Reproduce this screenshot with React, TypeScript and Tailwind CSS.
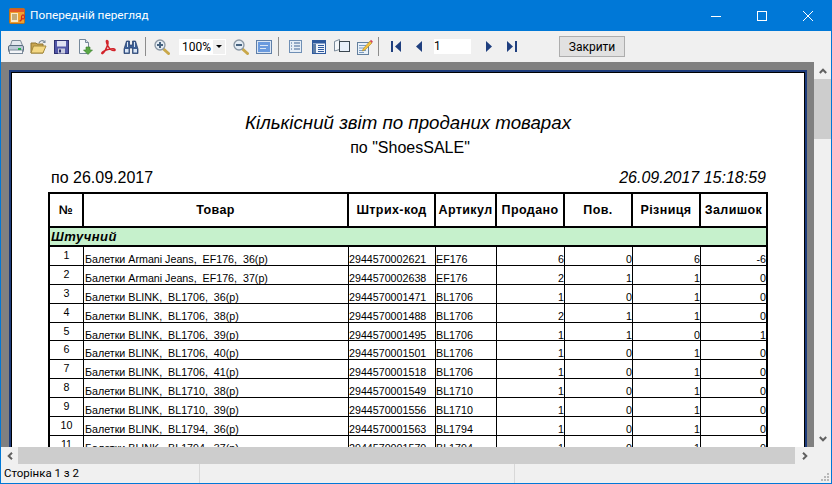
import React from 'react';

const SANS = "font-['Liberation_Sans',Arial,sans-serif]";

const rows = [
  ['1', 'Балетки Armani Jeans,  EF176,  36(р)', '2944570002621', 'EF176', '6', '0', '6', '-6'],
  ['2', 'Балетки Armani Jeans,  EF176,  37(р)', '2944570002638', 'EF176', '2', '1', '1', '0'],
  ['3', 'Балетки BLINK,  BL1706,  36(р)', '2944570001471', 'BL1706', '1', '0', '1', '0'],
  ['4', 'Балетки BLINK,  BL1706,  38(р)', '2944570001488', 'BL1706', '2', '1', '1', '0'],
  ['5', 'Балетки BLINK,  BL1706,  39(р)', '2944570001495', 'BL1706', '1', '1', '0', '1'],
  ['6', 'Балетки BLINK,  BL1706,  40(р)', '2944570001501', 'BL1706', '1', '0', '1', '0'],
  ['7', 'Балетки BLINK,  BL1706,  41(р)', '2944570001518', 'BL1706', '1', '0', '1', '0'],
  ['8', 'Балетки BLINK,  BL1710,  38(р)', '2944570001549', 'BL1710', '1', '0', '1', '0'],
  ['9', 'Балетки BLINK,  BL1710,  39(р)', '2944570001556', 'BL1710', '1', '0', '1', '0'],
  ['10', 'Балетки BLINK,  BL1794,  36(р)', '2944570001563', 'BL1794', '1', '0', '1', '0'],
  ['11', 'Балетки BLINK,  BL1794,  37(р)', '2944570001570', 'BL1794', '1', '0', '1', '0'],
];

const headers = ['№', 'Товар', 'Штрих-код', 'Артикул', 'Продано', 'Пов.', 'Різниця', 'Залишок'];

// toolbar icons, all drawn on a 16 box
const Ico = ({ children, w = 16, h = 16 }: { children: React.ReactNode; w?: number; h?: number }) => (
  <svg width={w} height={h} viewBox={`0 0 ${w} ${h}`} className="block">{children}</svg>
);

const Printer = () => (
  <Ico>
    <path d="M4 1.5h8.5l2 5h-12z" fill="#e4e9ef" stroke="#7b8a99" />
    <rect x="0.5" y="6.5" width="15" height="6.5" rx="1.5" fill="#bccad7" stroke="#5a6d80" />
    <rect x="1.5" y="11" width="13" height="3.5" fill="#f4f6f9" stroke="#7b8a99" />
    <rect x="10" y="9" width="3" height="2" fill="#22b14c" />
  </Ico>
);

const Folder = () => (
  <Ico w={17}>
    <path d="M1 4h5l1 1h6v9H1z" fill="#c9a550" stroke="#8e7430" />
    <path d="M1 14l2.5-7h12.5l-3 7z" fill="#f4d884" stroke="#a58a3c" />
    <path d="M9 4c1-2.5 3.5-3 5.5-1.5" fill="none" stroke="#7d8c99" strokeWidth="1.2" />
    <path d="M15.5 1v3h-3z" fill="#7d8c99" />
  </Ico>
);

const Floppy = () => (
  <Ico w={15}>
    <rect x="0.5" y="1.5" width="14" height="13" fill="#5257a8" stroke="#2d3070" />
    <rect x="3" y="2" width="9" height="5.5" fill="#dfe1f2" />
    <rect x="4" y="9.5" width="7" height="5" fill="#c9cce0" />
    <rect x="5" y="10.5" width="2" height="3" fill="#2d3070" />
  </Ico>
);

const DocDown = () => (
  <Ico>
    <path d="M2.5 0.5h6l3 3v11h-9z" fill="#f5f7fa" stroke="#76889a" />
    <path d="M8.5 0.5v3h3" fill="#d5dde6" stroke="#76889a" />
    <path d="M9 8h4v3h2.5L11 15.5 6.5 11H9z" fill="#5aa845" stroke="#3a7d2c" strokeWidth="0.6" />
  </Ico>
);

const Pdf = () => (
  <Ico>
    <path
      d="M7 1.5c-1 0-.8 2 1 5.5 1.3 2.6 3.5 4.6 6 4.6 1.6 0 1.4-1.7-.5-1.8-3-.2-8.5 1-11 3.2-1.6 1.4-.3 2.3 1 .8C6 11 8.6 4.5 8 2.5 7.8 1.8 7.5 1.5 7 1.5z"
      fill="none"
      stroke="#d2232a"
      strokeWidth="1.5"
    />
  </Ico>
);

const Binoculars = () => (
  <Ico>
    <path d="M3.5 2h3v4h3V2h3l2.5 8v4.5h-5.5V9h-3v5.5H1V10z" fill="#3d5f95" stroke="#1f3864" strokeWidth="0.7" />
    <rect x="2" y="10" width="3.5" height="3.5" fill="#dbe6f4" />
    <rect x="10.5" y="10" width="3.5" height="3.5" fill="#dbe6f4" />
    <rect x="4" y="3" width="1" height="5" fill="#dbe6f4" />
    <rect x="11" y="3" width="1" height="5" fill="#dbe6f4" />
  </Ico>
);

const Magnifier = ({ plus }: { plus?: boolean }) => (
  <Ico>
    <path d="M9.5 10l5 4.5" stroke="#c9a84a" strokeWidth="3" strokeLinecap="round" />
    <circle cx="6" cy="6" r="5" fill="#e4ecf4" stroke="#8a97a4" strokeWidth="1.3" />
    <rect x="3" y="5" width="6" height="2" fill="#46627f" />
    {plus && <rect x="5" y="3" width="2" height="6" fill="#46627f" />}
  </Ico>
);

const PageWidth = () => (
  <Ico>
    <rect x="0.5" y="1.5" width="15" height="13" fill="#dbe6f4" stroke="#5f7fa8" />
    <rect x="2" y="3" width="12" height="10" fill="#6a9ade" />
    <rect x="4" y="6" width="8" height="1" fill="#dbe6f4" />
    <rect x="4" y="9" width="6" height="1" fill="#dbe6f4" />
  </Ico>
);

const Outline = () => (
  <Ico w={13}>
    <rect x="0.5" y="1.5" width="12" height="12" fill="#e6eef7" stroke="#6f8fb5" />
    <path d="M2 4h1M2 7h1M2 10h1M5 4h6M5 7h6M5 10h6" stroke="#3f6394" />
  </Ico>
);

const Thumbs = () => (
  <Ico w={14}>
    <rect x="0.5" y="1.5" width="13" height="13" fill="#f0f4fa" stroke="#2f5a9e" />
    <rect x="0.5" y="1.5" width="13" height="3" fill="#2f5a9e" />
    <rect x="1" y="5" width="3" height="9" fill="#5f7fa8" />
    <path d="M6 6.5h6M6 8.5h6M6 10.5h6M6 12.5h6" stroke="#2f5a9e" />
  </Ico>
);

const Book = () => (
  <Ico>
    <path d="M0.5 12V2.5l5-2v10z" fill="#f4f7fb" stroke="#7c8c9c" />
    <rect x="5.5" y="2.5" width="10" height="10" fill="#e8f0fa" stroke="#3a4650" />
  </Ico>
);

const Note = () => (
  <Ico>
    <rect x="0.5" y="3.5" width="11" height="12" fill="#e8f0f8" stroke="#64809e" />
    <path d="M2 6.5h7M2 9h7M2 11.5h7M2 13.5h5" stroke="#7a9cc2" />
    <path d="M6 10l7-8 2 2-7 7-2.5 1z" fill="#f3c23c" stroke="#a9852a" strokeWidth="0.6" />
    <path d="M13 2l1-1.2 1.8 1.7L15 4z" fill="#d2405a" />
  </Ico>
);

const First = () => (
  <Ico w={10} h={11}>
    <rect x="0" y="0" width="2" height="11" fill="#1f3f7f" />
    <path d="M10 0v11L4 5.5z" fill="#1f3f7f" />
  </Ico>
);
const Last = () => (
  <Ico w={10} h={11}>
    <rect x="8" y="0" width="2" height="11" fill="#1f3f7f" />
    <path d="M0 0v11l6-5.5z" fill="#1f3f7f" />
  </Ico>
);
const Prev = () => (
  <Ico w={6} h={11}><path d="M6 0v11L0 5.5z" fill="#1f3f7f" /></Ico>
);
const Next = () => (
  <Ico w={6} h={11}><path d="M0 0v11l6-5.5z" fill="#1f3f7f" /></Ico>
);

const Slot = ({ children, className = '' }: { children: React.ReactNode; className?: string }) => (
  <div className={`w-[23px] h-[22px] flex items-center justify-center shrink-0 ${className}`}>{children}</div>
);

const Sep = ({ className = '' }: { className?: string }) => (
  <div className={`w-px h-[19px] bg-[#8c8c8c] shrink-0 ${className}`} />
);

const ScrollChevron = ({ rotate }: { rotate: string }) => (
  <svg width="8" height="6" viewBox="0 0 8 6" className={rotate}>
    <path d="M0.8 5L4 1.7 7.2 5" fill="none" stroke="#606060" strokeWidth="2" />
  </svg>
);

export default function App() {
  return (
    <div className={`w-[832px] h-[484px] flex flex-col overflow-hidden bg-[#f0f0f0] border border-[#0078d7] ${SANS}`}>
      {/* Title bar */}
      <div className="h-[30px] shrink-0 bg-[#0078d7] flex items-center text-white">
        <svg width="16" height="16" viewBox="0 0 16 16" className="ml-[8px]">
          <rect x="0.5" y="0.5" width="15" height="15" rx="1" fill="#f0a030" stroke="#b8701c" />
          <rect x="1" y="1" width="14" height="3" fill="#e2562a" />
          <rect x="2" y="5" width="7" height="9" fill="#fbe9c6" />
          <path d="M3 7h5M3 9h5M3 11h5" stroke="#8a6a30" />
          <path d="M12.5 9a1.5 2 0 1 0 0-.1v1.5c0 1.5-1 2.5-2 2.5" fill="none" stroke="#d02a1a" strokeWidth="1.2" />
        </svg>
        <span className="ml-[5px] text-[11.8px] font-['Roboto',sans-serif]">Попередній перегляд</span>
        <div className="ml-auto flex">
          <div className="w-[46px] h-[30px] flex items-center justify-center">
            <div className="w-[10px] h-px bg-white" />
          </div>
          <div className="w-[46px] h-[30px] flex items-center justify-center">
            <div className="w-[10px] h-[10px] border border-white" />
          </div>
          <div className="w-[46px] h-[30px] flex items-center justify-center">
            <svg width="10" height="10" viewBox="0 0 10 10">
              <path d="M0 0l10 10M10 0L0 10" stroke="#fff" strokeWidth="1" />
            </svg>
          </div>
        </div>
      </div>

      {/* Toolbar */}
      <div className="h-[31px] shrink-0 flex items-center pl-[3px] bg-[#f0f0f0]">
        <Slot><Printer /></Slot>
        <Slot><Folder /></Slot>
        <Slot><Floppy /></Slot>
        <Slot><DocDown /></Slot>
        <Slot><Pdf /></Slot>
        <Slot><Binoculars /></Slot>
        <Sep className="ml-[3px]" />
        <Slot className="ml-[4px]"><Magnifier plus /></Slot>
        <div className="ml-[6px] w-[47px] h-[16px] bg-white flex items-center justify-between shrink-0 text-[12px] text-black pl-[3px] font-['Roboto',sans-serif]">
          <span>100%</span>
          <span className="w-[12px] h-[14px] mr-px bg-[#f0f0f0] flex items-center justify-center">
            <span className="w-0 h-0 border-x-[3px] border-t-[3px] border-x-transparent border-t-black" />
          </span>
        </div>
        <Slot className="ml-[3px]"><Magnifier /></Slot>
        <Slot><PageWidth /></Slot>
        <Sep className="ml-[3px]" />
        <Slot className="ml-[5px]"><Outline /></Slot>
        <Slot><Thumbs /></Slot>
        <Slot><Book /></Slot>
        <Slot><Note /></Slot>
        <Sep className="ml-[2px]" />
        <Slot className="ml-[5px]"><First /></Slot>
        <Slot><Prev /></Slot>
        <div className="ml-[4px] w-[37px] h-[15px] bg-white text-[12px] leading-[15px] text-black shrink-0 font-['Roboto',sans-serif]">1</div>
        <Slot className="ml-[6px]"><Next /></Slot>
        <Slot><Last /></Slot>
        <button className="ml-[36px] w-[66px] h-[21px] shrink-0 bg-[#e1e1e1] border border-[#adadad] text-[12px] leading-none text-black font-['Roboto',sans-serif]">
          Закрити
        </button>
      </div>

      {/* Preview + vertical scrollbar */}
      <div className="h-[385px] shrink-0 flex">
        <div className="w-[813px] h-full bg-[#808080] overflow-hidden pt-[8px] pl-[8px] pr-[7px]">
          <div className="border-2 border-b-0 border-[#1c3a7a]">
            <div className="border border-b-0 border-black bg-white h-[400px] text-black">
              <div className="pt-[38px] text-center italic text-[18.7px] leading-[24px]">Кількісний звіт по проданих товарах</div>
              <div className="mt-[3px] pl-[4px] text-center text-[16px] leading-[20px]">по "ShoesSALE"</div>
              <div className="mt-[11px] ml-[39px] mr-[38px] flex justify-between text-[16px] leading-[18px]">
                <span>по 26.09.2017</span>
                <span className="italic">26.09.2017 15:18:59</span>
              </div>

              {/* Report table */}
              <div className="mt-[5px] ml-[36px] w-[720px] border-2 border-b-0 border-black">
                <div className="grid grid-cols-[34px_265px_87px_61px_68px_68px_68px_65px] h-[34px] border-b-2 border-black">
                  {headers.map((h, i) => (
                    <div
                      key={h}
                      className={`flex items-center justify-center pt-px text-[12.5px] font-bold tracking-[0.4px] whitespace-nowrap border-black ${i < 7 ? 'border-r-2' : ''}`}
                    >
                      {h}
                    </div>
                  ))}
                </div>
                <div className="h-[19px] bg-[#c6f1cc] border-b-2 border-black pl-px text-[13px] leading-[17px] font-bold italic tracking-[0.5px]">
                  Штучний
                </div>
                {rows.map((r) => (
                  <div
                    key={r[0]}
                    className="grid grid-cols-[34px_265px_87px_61px_68px_68px_68px_65px] h-[18.9px] border-b border-black text-[10.7px] leading-[12px]"
                  >
                    <div className="border-r border-black text-center pt-[2px]">{r[0]}</div>
                    <div className="border-r border-black pl-px pt-[6px] whitespace-pre">{r[1]}</div>
                    <div className="border-r border-black pt-[6px]">{r[2]}</div>
                    <div className="border-r border-black pt-[6px]">{r[3]}</div>
                    <div className="border-r border-black text-right pt-[6px]">{r[4]}</div>
                    <div className="border-r border-black text-right pt-[6px]">{r[5]}</div>
                    <div className="border-r border-black text-right pt-[6px]">{r[6]}</div>
                    <div className="text-right pt-[6px]">{r[7]}</div>
                  </div>
                ))}
              </div>
            </div>
          </div>
        </div>
        <div className="w-[17px] h-full flex flex-col bg-[#f0f0f0]">
          <div className="h-[17px] flex items-center justify-center"><ScrollChevron rotate="" /></div>
          <div className="flex-1">
            <div className="h-[60px] bg-[#cdcdcd]" />
          </div>
          <div className="h-[17px] flex items-center justify-center"><ScrollChevron rotate="rotate-180" /></div>
        </div>
      </div>

      {/* Horizontal scrollbar */}
      <div className="h-[17px] shrink-0 flex bg-[#f0f0f0]">
        <div className="w-[17px] flex items-center justify-center"><ScrollChevron rotate="-rotate-90" /></div>
        <div className="w-[777px] h-full bg-[#cdcdcd]" />
        <div className="w-[19px] flex items-center justify-center"><ScrollChevron rotate="rotate-90" /></div>
      </div>

      {/* Status bar */}
      <div className="flex-1 flex items-center text-[11.5px] text-black font-['Roboto',sans-serif]">
        <div className="w-[199px] h-full pl-[3px] border-r border-[#d8d8d8] flex items-center">Сторінка 1 з 2</div>
        <div className="w-[315px] h-full border-r border-[#d8d8d8]" />
        <div className="flex-1 h-full flex items-end justify-end pr-px pb-px">
          <svg width="10" height="10" viewBox="0 0 10 10">
            <path d="M7 1h2v2H7zM4 4h2v2H4zM7 4h2v2H7zM1 7h2v2H1zM4 7h2v2H4zM7 7h2v2H7z" fill="#b8b8b8" />
          </svg>
        </div>
      </div>
    </div>
  );
}
